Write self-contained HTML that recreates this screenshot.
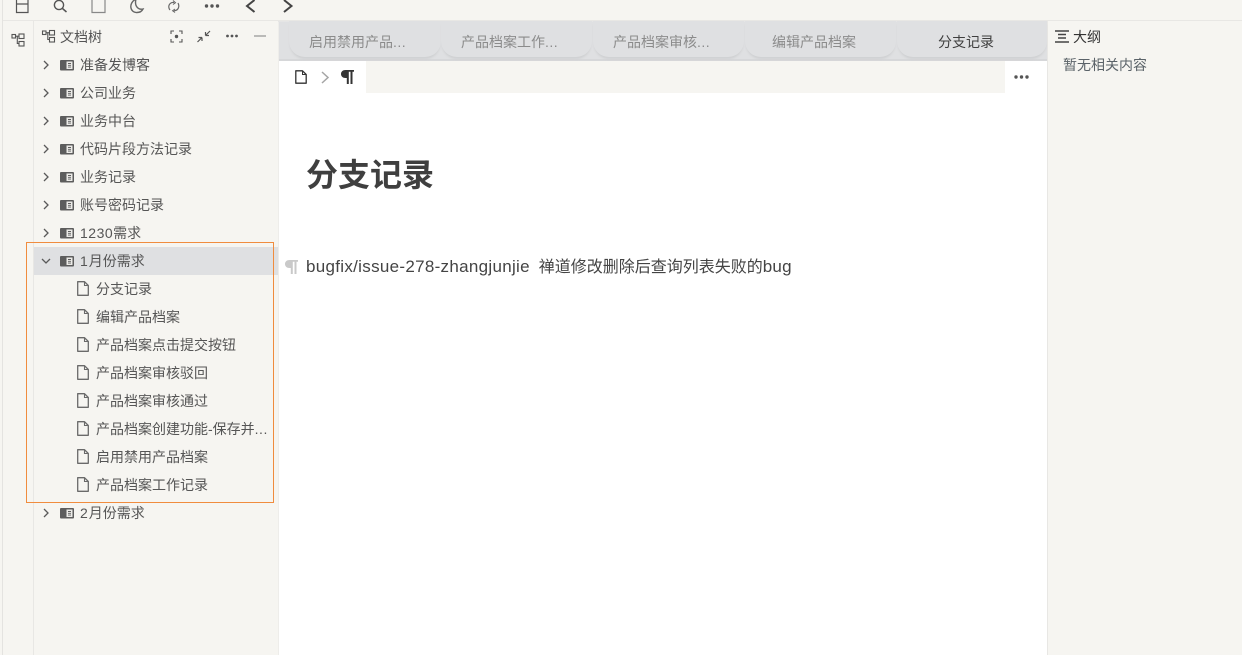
<!DOCTYPE html>
<html><head><meta charset="utf-8">
<style>
*{box-sizing:border-box}
html,body{margin:0;padding:0;width:1242px;height:655px;overflow:hidden;background:#fff;font-family:"Liberation Sans","Noto Sans CJK SC",sans-serif;color:#3f3f3f}
.a{position:absolute}
.t{position:absolute;white-space:nowrap;font-size:14px;line-height:20px}
svg{position:absolute;overflow:visible}
.tab{position:absolute;top:21px;height:36px;border-radius:0 0 16px 16px;background:#dfe0e2;box-shadow:0 3px 2px -1px #cfd0d2}
.tt{position:absolute;top:32px;font-size:14px;line-height:20px;color:#8b8b8b;white-space:nowrap}
.d{letter-spacing:.5px}
</style></head><body>
<div class="a" style="left:0;top:0;width:1242px;height:655px;background:#f6f5f1"></div>
<div class="a" style="left:2px;top:0;width:1px;height:655px;background:#e4e3e0"></div>
<div class="a" style="left:3px;top:20px;width:1239px;height:1px;background:#e8e7e4"></div>
<div class="a" style="left:33px;top:21px;width:1px;height:634px;background:#e8e7e4"></div>
<div class="a" style="left:279px;top:21px;width:768px;height:634px;background:#fff"></div>
<div class="a" style="left:278px;top:21px;width:1px;height:634px;background:#eeedea"></div>
<div class="a" style="left:1047px;top:21px;width:1px;height:634px;background:#e8e7e4"></div>

<!-- top bar icons -->
<svg style="left:0;top:0" width="300" height="20" fill="none" stroke="#555" stroke-width="1.2">
<path d="M16.5 0V12.500H28V0M16.500 4H28" />
<circle cx="59" cy="5" r="4.600" stroke-width="1.400"/><path d="M62.500 8.500L66.500 12" stroke-width="1.500"/>
<path d="M92 0V12.500H105V0" stroke="#888"/>
<path d="M137 0C129 4 131 14 138 13.500C141 13.500 143 12 144 10C140 11 135 8 137 0Z" stroke="#666" stroke-width="1.400" transform="translate(-1,-1)"/>
<path d="M170 10C167 6 170 2 174 2.500M178 3C180 7 178 10.500 174 10.800" stroke="#666"/><path d="M173 .5L175.500 2.700L173 4.500M175 9L172.600 10.800L175 12.500" stroke="#666" stroke-width="1"/>
<g fill="#555" stroke="none"><circle cx="206.500" cy="6" r="1.700"/><circle cx="212" cy="6" r="1.700"/><circle cx="217.500" cy="6" r="1.700"/></g>
<path d="M254.500 0L247 6L254.500 12" stroke="#444" stroke-width="2"/>
<path d="M284 0L291.500 6L284 12" stroke="#444" stroke-width="2"/>
</svg>

<!-- dock icon -->
<svg style="left:11px;top:33px" width="14" height="14" fill="none" stroke="#555" stroke-width="1.100"><rect x="1" y="1.500" width="3.500" height="3.500"/><rect x="8" y="1" width="5" height="4.500"/><rect x="8" y="8.500" width="5" height="4.500"/><path d="M4.500 3.200H8M6.300 3.200V10.500H8"/></svg>

<!-- tree header -->
<svg style="left:42px;top:30px" width="14" height="14" fill="none" stroke="#555" stroke-width="1.100"><rect x=".5" y="1" width="3.500" height="3.500"/><rect x="7.500" y=".5" width="5" height="4.500"/><rect x="7.500" y="7.500" width="5" height="4.500"/><path d="M4 2.700H7.500M5.800 2.700V9.500H7.500"/></svg>
<div class="t" style="left:60px;top:27px;color:#555;font-size:14px">文档树</div>
<svg style="left:170px;top:30px" width="100" height="14" fill="none" stroke="#555" stroke-width="1.100">
<path d="M1 4V1H4M9 1H12V4M12 9V12H9M4 12H1V9"/><circle cx="6.500" cy="6.500" r="1.700" fill="#555" stroke="none"/>
<path d="M27.500 12L32 7.500M32 7.500V11M32 7.500H28.500M40 1L35.500 5.500M35.500 5.500V2M35.500 5.500H39" stroke="#555" stroke-width="1.200"/>
<g fill="#555" stroke="none"><circle cx="57.500" cy="6" r="1.400"/><circle cx="62" cy="6" r="1.400"/><circle cx="66.500" cy="6" r="1.400"/></g>
<path d="M84 6H96" stroke="#999" stroke-width="1.300"/>
</svg>

<!-- selected row -->
<div class="a" style="left:34px;top:247px;width:244px;height:28px;background:#dfe0e2"></div>
<div class="a" style="left:26px;top:242px;width:248px;height:261px;border:1px solid #f08c3e"></div>

<!-- arrows + notebooks -->
<svg style="left:0;top:0" width="280" height="655" fill="none">
<defs>
<g id="nb"><rect x="0" y="0" width="14" height="10.500" rx="1" fill="#5d5d5d"/><rect x="6.500" y="1.500" width="6" height="7.500" fill="#ecebe8"/><path d="M8 3.500H11M8 5.300H11M8 7.100H11" stroke="#5d5d5d" stroke-width=".9"/></g>
<path id="ar" d="M0 0L4 4L0 8" stroke="#5a5a5a" stroke-width="1.300"/>
<g id="doc"><path d="M.7 .7H7.500L11.300 4.500V14.300H.7Z" stroke="#6a6a6a" stroke-width="1.300" fill="none" stroke-linejoin="round"/><path d="M7.500 .7V4.500H11.300" stroke="#6a6a6a" stroke-width="1.100"/></g>
</defs>
<use href="#ar" x="44" y="61"/><use href="#ar" x="44" y="89"/><use href="#ar" x="44" y="117"/><use href="#ar" x="44" y="145"/><use href="#ar" x="44" y="173"/><use href="#ar" x="44" y="201"/><use href="#ar" x="44" y="229"/><use href="#ar" x="44" y="509"/>
<path d="M42 259L46 263L50 259" stroke="#5a5a5a" stroke-width="1.300"/>
<use href="#nb" x="60" y="60"/><use href="#nb" x="60" y="88"/><use href="#nb" x="60" y="116"/><use href="#nb" x="60" y="144"/><use href="#nb" x="60" y="172"/><use href="#nb" x="60" y="200"/><use href="#nb" x="60" y="228"/><use href="#nb" x="60" y="256"/><use href="#nb" x="60" y="508"/>
<use href="#doc" x="77" y="281"/><use href="#doc" x="77" y="309"/><use href="#doc" x="77" y="337"/><use href="#doc" x="77" y="365"/><use href="#doc" x="77" y="393"/><use href="#doc" x="77" y="421"/><use href="#doc" x="77" y="449"/><use href="#doc" x="77" y="477"/>
</svg>

<div style="color:#555">
<div class="t" style="left:80px;top:55px">准备发博客</div>
<div class="t" style="left:80px;top:83px">公司业务</div>
<div class="t" style="left:80px;top:111px">业务中台</div>
<div class="t" style="left:80px;top:139px">代码片段方法记录</div>
<div class="t" style="left:80px;top:167px">业务记录</div>
<div class="t" style="left:80px;top:195px">账号密码记录</div>
<div class="t" style="left:80px;top:223px"><span class="d">1230</span>需求</div>
<div class="t" style="left:80px;top:251px"><span class="d" style="letter-spacing:1px">1</span>月份需求</div>
<div class="t" style="left:96px;top:279px">分支记录</div>
<div class="t" style="left:96px;top:307px">编辑产品档案</div>
<div class="t" style="left:96px;top:335px">产品档案点击提交按钮</div>
<div class="t" style="left:96px;top:363px">产品档案审核驳回</div>
<div class="t" style="left:96px;top:391px">产品档案审核通过</div>
<div class="t" style="left:96px;top:419px">产品档案创建功能-保存并<span class="d">...</span></div>
<div class="t" style="left:96px;top:447px">启用禁用产品档案</div>
<div class="t" style="left:96px;top:475px">产品档案工作记录</div>
<div class="t" style="left:80px;top:503px"><span class="d" style="letter-spacing:1px">2</span>月份需求</div>
</div>

<!-- tabs -->
<div class="a" style="left:279px;top:21px;width:768px;height:40px;background:#d6d7d9"></div>
<div class="a" style="left:279px;top:21px;width:768px;height:38px;background:#dfe0e2"></div>
<div class="a" style="left:278px;top:21px;width:769px;height:1px;background:#e5e5e5"></div>
<div class="tab" style="left:289px;width:152px"></div>
<div class="tab" style="left:441px;width:151px"></div>
<div class="tab" style="left:593px;width:151px"></div>
<div class="tab" style="left:745px;width:151px"></div>
<div class="tab" style="left:897px;width:150px"></div>
<div class="tt" style="left:309px">启用禁用产品<span class="d">...</span></div>
<div class="tt" style="left:461px">产品档案工作<span class="d">...</span></div>
<div class="tt" style="left:613px">产品档案审核<span class="d">...</span></div>
<div class="tt" style="left:772px">编辑产品档案</div>
<div class="tt" style="left:938px;color:#3f3f3f">分支记录</div>

<!-- breadcrumb -->
<div class="a" style="left:366px;top:61px;width:639px;height:32px;background:#f6f5f1"></div>
<svg style="left:295px;top:70px" width="70" height="16" fill="none"><path d="M.8 .8H7.500L11.200 4.500V13.200H.8Z" stroke="#333" stroke-width="1.300" stroke-linejoin="round"/><path d="M7.500 1V4.500H11" stroke="#333" stroke-width="1"/><path d="M27 2L33 7.500L27 13" stroke="#a5a5a5" stroke-width="1.500"/></svg>
<svg style="left:341px;top:70px" width="13" height="14"><path d="M4.500 0H13V1.800H11.500V14H9.500V1.800H7.800V14H5.800V8H4.500C1.800 8 0 6.300 0 4S1.800 0 4.500 0Z" fill="#333"/></svg>
<svg style="left:1014px;top:74px" width="16" height="6"><g fill="#555"><circle cx="2" cy="3" r="1.700"/><circle cx="7.500" cy="3" r="1.700"/><circle cx="13" cy="3" r="1.700"/></g></svg>

<!-- editor -->
<div class="t" style="left:306px;top:153px;font-size:32px;line-height:44px;font-weight:bold;color:#3f3f3f">分支记录</div>
<svg style="left:285px;top:260px" width="13" height="14"><path d="M4.500 0H13V1.800H11.500V14H9.500V1.800H7.800V14H5.800V8H4.500C1.800 8 0 6.300 0 4S1.800 0 4.500 0Z" fill="#c9c9c9"/></svg>
<div class="t" style="left:306px;top:256px;font-size:16px;line-height:22px;color:#444"><span style="font-size:17px;letter-spacing:.3px">bugfix/issue-278-zhangjunjie</span>&nbsp; 禅道修改删除后查询列表失败的<span style="font-size:17px;letter-spacing:.2px">bug</span></div>

<!-- outline -->
<svg style="left:1055px;top:30px" width="14" height="13" stroke="#444" stroke-width="1.500"><path d="M0 1H14M3 4.500H11M3 8H11M0 12H14"/></svg>
<div class="t" style="left:1073px;top:27px;font-size:14px;color:#333">大纲</div>
<div class="t" style="left:1063px;top:55px;font-size:14px;color:#5a6268">暂无相关内容</div>
</body></html>
